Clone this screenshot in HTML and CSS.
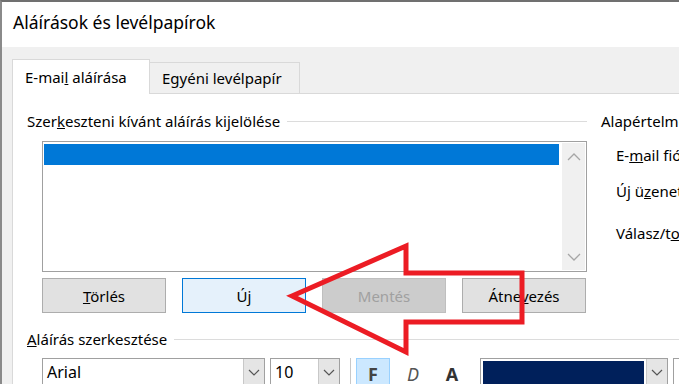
FILE: index.html
```html
<!DOCTYPE html>
<html lang="hu">
<head>
    <meta charset="UTF-8" />
    <title>Aláírások és levélpapírok</title>
    <link rel="stylesheet" href="styles.css">
</head>
<body>
    <div class="window">
        <div class="titlebar">Aláírások és levélpapírok</div>

        <div class="client">
            <div class="tabs">
                <div class="tab active">E-mai<u>l</u> aláírása</div>
                <div class="tab">E<u>g</u>yéni levélpapír</div>
            </div>

            <div class="panel">
                <div class="top-row">
                    <div class="left-col">
                        <div class="group-head">
                            <span>Szer<u>k</u>eszteni kívánt aláírás kijelölése</span>
                            <span class="rule"></span>
                        </div>

                        <div class="listbox">
                            <div class="list-items">
                                <div class="list-item selected"></div>
                            </div>
                            <div class="scrollbar">
                                <svg width="14" height="8" viewBox="0 0 14 8"><polyline points="1,7 7,1 13,7" fill="none" stroke="#a6a6a6" stroke-width="1.3"/></svg>
                                <svg width="14" height="8" viewBox="0 0 14 8"><polyline points="1,1 7,7 13,1" fill="none" stroke="#a6a6a6" stroke-width="1.3"/></svg>
                            </div>
                        </div>

                        <div class="btn-row">
                            <button class="btn"><u>T</u>örlés</button>
                            <button class="btn focused">Ú<u>j</u></button>
                            <button class="btn disabled">Mentés</button>
                            <button class="btn">Átne<u>v</u>ezés</button>
                        </div>
                    </div>

                    <div class="right-col">
                        <div class="right-head">Alapértelmezett aláírás kiválasztása</div>
                        <div class="field">E-<u>m</u>ail fiók:</div>
                        <div class="field">Új ü<u>z</u>enetek:</div>
                        <div class="field">Válasz/t<u>o</u>vábbítás:</div>
                    </div>
                </div>

                <div class="group-head wide">
                    <span><u>A</u>láírás szerkesztése</span>
                    <span class="rule"></span>
                </div>

                <div class="toolbar">
                    <div class="combo font-combo">
                        <span class="combo-text">Arial</span>
                        <span class="combo-btn"><svg width="12" height="7" viewBox="0 0 12 7"><polyline points="1,1 6,6 11,1" fill="none" stroke="#555" stroke-width="1.2"/></svg></span>
                    </div>
                    <div class="combo size-combo">
                        <span class="combo-text">10</span>
                        <span class="combo-btn"><svg width="12" height="7" viewBox="0 0 12 7"><polyline points="1,1 6,6 11,1" fill="none" stroke="#555" stroke-width="1.2"/></svg></span>
                    </div>
                    <span class="vsep"></span>
                    <span class="fmt-btn pressed">F</span>
                    <span class="fmt-btn italic">D</span>
                    <span class="fmt-btn under">A</span>
                    <div class="combo color-combo">
                        <span class="swatch"></span>
                        <span class="combo-btn"><svg width="12" height="7" viewBox="0 0 12 7"><polyline points="1,1 6,6 11,1" fill="none" stroke="#555" stroke-width="1.2"/></svg></span>
                    </div>
                    <span class="combo edge"></span>
                </div>
            </div>
        </div>

        <!-- callout arrow drawn on top of the dialog -->
        <svg class="callout" width="679" height="384" viewBox="0 0 679 384">
            <polygon points="292,296 406,246 406,273 522,273 522,322 406,322 406,352"
                fill="none" stroke="#ec1c24" stroke-width="5" stroke-linejoin="miter"/>
        </svg>
    </div>
</body>
</html>
```

FILE: styles.css
```css
* {
    box-sizing: border-box;
    margin: 0;
    padding: 0;
}

body {
    width: 679px;
    height: 384px;
    overflow: hidden;
    background: #fff;
    font-family: 'Noto Sans', 'Open Sans', sans-serif;
    font-size: 15px;
    color: #000;
}

.window {
    position: relative;
    width: 679px;
    height: 384px;
    overflow: hidden;
    border-top: 2px solid #707070;
    border-left: 2px solid #8a8a8a;
}

.titlebar {
    height: 45px;
    background: #fff;
    padding: 8px 0 0 11px;
    font-size: 17.5px;
    line-height: 24px;
    white-space: nowrap;
}

.client {
    height: 337px;
    background: #f0f0f0;
    padding: 12px 0 0 10px;
}

.tabs {
    display: flex;
    align-items: flex-end;
    height: 34px;
}

.tab {
    height: 31px;
    padding: 0 12px;
    border: 1px solid #d9d9d9;
    border-bottom: none;
    background: #f0f0f0;
    line-height: 30px;
    white-space: nowrap;
}

.tab.active {
    position: relative;
    z-index: 1;
    height: 35px;
    margin-bottom: -1px;
    width: 138px;
    background: #fff;
    line-height: 34px;
    padding: 0 12px;
}

.tab:not(.active) {
    width: 150px;
    border-left: none;
}

.panel {
    height: 400px;
    background: #fff;
    border: 1px solid #d9d9d9;
    border-right: none;
    padding: 17px 0 0 14px;
}

.top-row {
    display: flex;
    white-space: nowrap;
}

.left-col {
    width: 560px;
    flex-shrink: 0;
}

.group-head {
    display: flex;
    align-items: center;
    height: 20px;
    gap: 7px;
    white-space: nowrap;
}

.group-head .rule {
    flex: 1;
    height: 1px;
    background: #dcdcdc;
}

.listbox {
    display: flex;
    width: 545px;
    height: 131px;
    margin: 10px 0 0 15px;
    border: 1px solid #a0a0a0;
    padding: 1px;
}

.list-items {
    flex: 1;
    padding-top: 1px;
}

.list-item {
    height: 21px;
}

.list-item.selected {
    background: #0078d7;
    margin-right: 3px;
}

.scrollbar {
    width: 23px;
    background: #f0f0f0;
    display: flex;
    flex-direction: column;
    justify-content: space-between;
    align-items: center;
    padding: 10px 0 9px;
}

.btn-row {
    display: flex;
    justify-content: space-between;
    width: 544px;
    margin: 6px 0 0 15px;
}

.btn {
    width: 124px;
    height: 35px;
    font-family: inherit;
    font-size: 15px;
    color: #000;
    background: #e1e1e1;
    border: 1px solid #adadad;
}

.btn.focused {
    background: #e5f1fb;
    border: 1px solid #0078d7;
}

.btn.disabled {
    background: #cccccc;
    border-color: #bfbfbf;
    color: #a0a0a0;
}

.right-col {
    padding-left: 14px;
    white-space: nowrap;
}

.right-head {
    height: 20px;
    line-height: 20px;
}

.field {
    padding-left: 15px;
    height: 36px;
    line-height: 36px;
}

.field:nth-child(2) {
    margin-top: 6px;
}

.field:nth-child(4) {
    margin-top: 6px;
}

.group-head.wide {
    margin-top: 16px;
}

.toolbar {
    display: flex;
    align-items: flex-start;
    margin: 9px 0 0 15px;
}

.toolbar > * {
    flex-shrink: 0;
}

.combo {
    display: flex;
    height: 28px;
    border: 1px solid #a0a0a0;
    background: #fff;
}

.combo-text {
    flex: 1;
    padding: 2px 0 0 4px;
    font-size: 16px;
}

.combo-btn {
    width: 21px;
    background: #e5e5e5;
    border-left: 1px solid #c8c8c8;
    display: flex;
    align-items: center;
    justify-content: center;
}

.font-combo {
    width: 223px;
}

.size-combo {
    width: 70px;
    margin-left: 5px;
}

.vsep {
    width: 1px;
    height: 28px;
    background: #c8c8c8;
    margin-left: 10px;
}

.fmt-btn {
    width: 34px;
    height: 28px;
    margin-left: 5px;
    text-align: center;
    font-weight: bold;
    font-size: 18px;
    line-height: 30px;
    color: #444;
    border: 1px solid transparent;
}

.fmt-btn.pressed {
    background: #cce8ff;
    border-color: #99d1ff;
}

.fmt-btn.italic {
    font-style: italic;
    font-weight: normal;
    margin-left: 6px;
    color: #555;
}

.fmt-btn.under {
    color: #333;
}

.color-combo {
    width: 188px;
    margin-left: 11px;
    padding: 2px 0 0 2px;
}

.swatch {
    flex: 1;
    background: #00205b;
    margin-right: 2px;
}

.color-combo .combo-btn {
    margin-top: -2px;
}

.combo.edge {
    width: 20px;
    margin-left: 5px;
}

.callout {
    position: absolute;
    left: -2px;
    top: -2px;
}
```
